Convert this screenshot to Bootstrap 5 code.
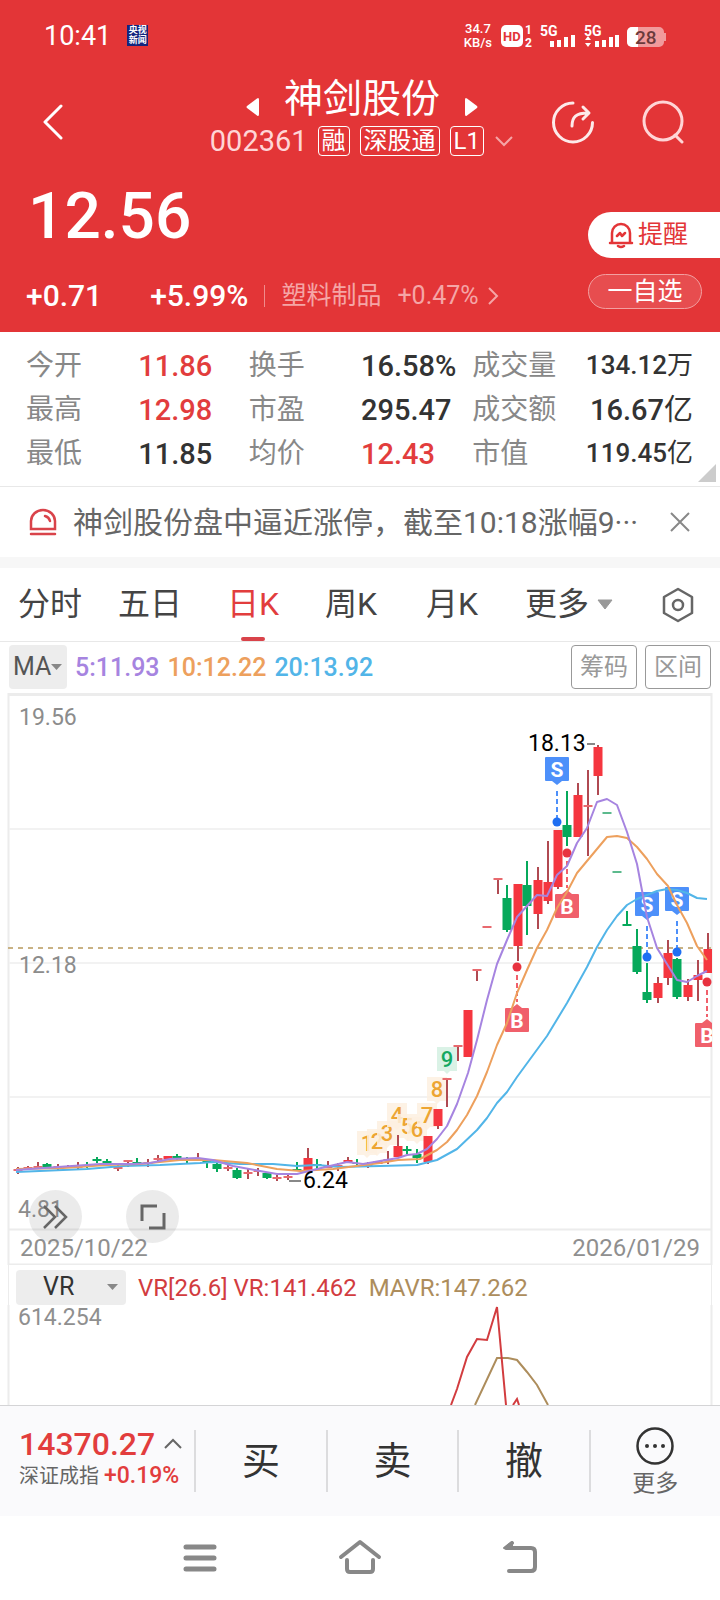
<!DOCTYPE html>
<html lang="zh-CN">
<head>
<meta charset="utf-8">
<meta name="viewport" content="width=device-width, initial-scale=1">
<title>神剑股份 002361</title>
<link href="https://cdn.jsdelivr.net/npm/bootstrap@5.3.0/dist/css/bootstrap.min.css" rel="stylesheet">
<style>
  :root { --up:#e23d3d; --brand:#e33537; --ink:#333; --mute:#888; --line:#ececec; }
  body { font-family: Roboto, "Noto Sans CJK SC", sans-serif; color: var(--ink); background:#fff; line-height:1.2; }
  button, select { font-family: inherit; color: inherit; }
  svg { display:block; flex-shrink:0; }
  .bare { background:none; border:0; padding:0; }
  .quote-head { background: var(--brand); color:#fff; height:332px; }
  .status-bar { height:72px; padding-left:44px; padding-right:50px; }
  .clock { font-size:27px; }
  .news-app { background:#14257d; font-size:9px; line-height:10px; width:21px; height:21px; }
  .net-speed { font-size:13px; line-height:14px; font-weight:500; }
  .title-bar { height:100px; padding-left:42px; padding-right:36px; }
  .title-block { padding-bottom:12px; margin-right:38px; }
  .stock-name { font-size:39px; line-height:50px; }
  .stock-sub { gap:10px; }
  .stock-code { font-size:29px; color:#ffd5d6; }
  .tag { border:1px solid #fff; border-radius:4px; font-size:24px; line-height:28px; padding:0 3px; }
  .price { font-size:64px; font-weight:500; line-height:90px; padding-left:28px; }
  .chg-row { padding:16px 0 0 26px; }
  .chg { font-size:30px; font-weight:500; }
  .sector { font-size:25px; color:#f5a5a6; border-left:1px solid #f08b8c; line-height:22px; text-decoration:none; }
  .remind { background:#fff; color:var(--brand); border-radius:23px 0 0 23px; width:132px; height:46px; font-size:25px; }
  .favor { border:1px solid #f2a0a1; background:#e74d4f; color:#fff; border-radius:18px; width:114px; height:35px; font-size:25px; line-height:25px; margin-right:18px; }
  .stats { height:155px; padding:12px 27px 0 26px; border-bottom:1px solid #e8e8e8; display:grid; grid-template-columns:112fr 110fr 112fr 111fr 86fr 134fr; grid-auto-rows:44px; align-items:center; font-size:29px; position:relative; }
  .stats dt { font-weight:400; color:var(--mute); white-space:nowrap; font-size:28px; }
  .stats dd { margin:0; font-weight:500; white-space:nowrap; }
  .stats .end-val { text-align:right; }
  .stats .tight { font-size:26px; }
  .unit { font-weight:400; }
  .up { color:var(--up); }
  .corner { position:absolute; right:4px; bottom:4px; }
  .flash { height:70px; padding:0 29px; font-size:30px; color:#666; }
  .flash-text { padding-top:2px; }
  .periods { height:85px; border-top:11px solid #f7f7f7; border-bottom:1px solid #e8e8e8; padding:0 26px 0 18px; font-size:32px; display:grid; grid-template-columns:100fr 109fr 98fr 101fr 99fr 137fr 32fr; justify-items:start; }
  .periods button { height:100%; position:relative; color:#444; }
  .periods button.active { color:var(--up); }
  .periods button.active::after { content:""; position:absolute; left:14px; right:14px; bottom:0; height:4px; border-radius:2px; background:#d9434a; }
  .ma-row { height:50px; padding:3px 9px; font-size:25px; }
  .pick { appearance:none; border:0; border-radius:4px; background:#ededed; color:#555; }
  .pick-wrap { position:relative; }
  .pick-wrap svg { position:absolute; right:5px; top:50%; translate:0 -50%; pointer-events:none; }
  .ma-pick { width:58px; height:44px; font-size:25px; padding-left:4px; }
  .vr-pick { width:110px; height:35px; font-size:25px; padding-left:27px; color:#333; }
  .wide svg { right:8px; }
  .ma-val { font-weight:500; padding-top:2px; }
  .boxed { border:1px solid #999; border-radius:4px; background:#fff; color:#999; font-size:24px; width:66px; height:44px; padding:0; }
  .chart-area { position:relative; }
  .chart-area svg.plot, .vr-plot { width:100%; height:auto; }
  .fab { position:absolute; bottom:22px; width:53px; height:53px; border-radius:50%; background:rgba(120,120,120,.15); border:0; padding:0; }
  .fab-scroll { left:4%; }
  .fab-full { left:17.5%; }
  .vr-row { height:40px; font-size:24px; margin:0 8px; border-left:1px solid var(--line); border-right:1px solid var(--line); padding:4px 16px 0 7px; }
  .vr-row span { padding-top:2px; }
  .vr-red { color:#d23c3f; } .vr-tan { color:#ad8d5c; }
  .trade-bar { background:#fafafc; border-top:1px solid #d4d4d6; height:111px; }
  .index-cell { width:27%; padding-left:19px; padding-bottom:4px; }
  .index-val { font-size:32px; font-weight:500; line-height:34px; }
  .index-sub { font-size:20px; color:#666; line-height:30px; }
  .index-sub span { font-size:23px; font-weight:500; }
  .cell { border-left:2px solid #dcdcde; height:62px; font-size:38px; line-height:62px; flex:1; }
  .cell-more { font-size:23px; line-height:28px; color:#666; flex:1; gap:4px; padding-top:2px; }
  .sys-nav { height:84px; }
</style>
</head>
<body>
<header class="quote-head d-flex flex-column">
  <div class="status-bar d-flex align-items-center justify-content-between">
    <div class="d-flex align-items-center gap-3">
      <span class="clock">10:41</span>
      <span class="news-app text-center fw-bold">央视<br>新闻</span>
    </div>
    <div class="d-flex align-items-center gap-2">
      <span class="net-speed text-center">34.7<br>KB/s</span>
      <svg width="170" height="28" viewBox="500 22 170 28" fill="#fff" font-family="Roboto, sans-serif" font-weight="700">
        <rect x="501" y="25" width="22" height="22" rx="5"/>
        <text x="503" y="41" font-size="13" fill="#e33537">HD</text>
        <text x="525" y="34" font-size="12">1</text><text x="525" y="47" font-size="12">2</text>
        <text x="540" y="36" font-size="14">5G</text>
        <path d="M550 41h4v6h-4zM557 40h4v7h-4zM564 37h4v10h-4zM571 35h4v12h-4z"/>
        <text x="584" y="36" font-size="14">5G</text>
        <path d="M588 36l3 4h-6zM585 43h6l-3 4zM595 41h4v6h-4zM602 40h4v7h-4zM609 37h4v10h-4zM615 35h4v12h-4z"/>
        <path d="M632 27h27a5 5 0 0 1 5 5v1h2v8h-2v1a5 5 0 0 1-5 5h-27a5 5 0 0 1-5-5v-10a5 5 0 0 1 5-5z" opacity=".5"/>
        <path d="M638 27v20h-6a5 5 0 0 1-5-5v-10a5 5 0 0 1 5-5z"/>
        <text x="635" y="44" font-size="19" font-weight="500" fill="#6b3a3b">28</text>
      </svg>
    </div>
  </div>
  <div class="title-bar d-flex align-items-center justify-content-between">
    <button class="bare" aria-label="返回"><svg width="22" height="36" viewBox="0 0 22 36" fill="none" stroke="#fff" stroke-width="3" stroke-linecap="round" stroke-linejoin="round"><path d="M19 2L3 18l16 16"/></svg></button>
    <div class="title-block d-flex flex-column align-items-center ms-auto">
      <div class="d-flex align-items-center gap-4">
        <button class="bare pt-3" aria-label="上一只"><svg width="14" height="20" viewBox="0 0 14 20" fill="#fff"><path d="M11 1.500Q13 0 13 3v14q0 3-2 1.500L1 11q-1-1 0-2z"/></svg></button>
        <h1 class="stock-name fw-normal m-0">神剑股份</h1>
        <button class="bare pt-3" aria-label="下一只"><svg width="14" height="20" viewBox="0 0 14 20" fill="#fff"><path d="M3 1.500Q1 0 1 3v14q0 3 2 1.500L13 11q1-1 0-2z"/></svg></button>
      </div>
      <div class="stock-sub d-flex align-items-center">
        <span class="stock-code">002361</span>
        <span class="tag">融</span><span class="tag">深股通</span><span class="tag">L1</span>
        <svg width="20" height="12" viewBox="0 0 20 12" fill="none" stroke="#f5a5a6" stroke-width="2"><path d="M2 2l8 8 8-8"/></svg>
      </div>
    </div>
    <div class="d-flex align-items-center gap-5">
      <button class="bare" aria-label="分享"><svg width="42" height="44" viewBox="0 0 42 44" fill="none" stroke="#fdeaea" stroke-width="3" stroke-linecap="round" stroke-linejoin="round"><path d="M21 3A19.500 19.500 0 1 0 40.500 22.500M20 26c0-9 4-13 16-13M31 7l6 6-6 6"/></svg></button>
      <button class="bare" aria-label="搜索"><svg width="42" height="44" viewBox="0 0 42 44" fill="none" stroke="#ffd5d6" stroke-width="3" stroke-linecap="round"><circle cx="21" cy="21" r="19"/><path d="M33 35l7 7"/></svg></button>
    </div>
  </div>
  <div class="d-flex justify-content-between flex-grow-1">
    <div>
      <div class="price">12.56</div>
      <div class="chg-row d-flex align-items-center">
        <span class="chg">+0.71</span>
        <span class="chg ms-5 ps-0">+5.99%</span>
        <a class="sector d-flex align-items-center ms-3 ps-3 gap-2" href="#">塑料制品 <span class="ms-2">+0.47%</span>
          <svg width="12" height="20" viewBox="0 0 12 20" fill="none" stroke="#f5a5a6" stroke-width="2"><path d="M2 2l8 8-8 8"/></svg></a>
      </div>
    </div>
    <div class="d-flex flex-column align-items-end pt-4 mt-3">
      <button class="remind border-0 d-flex align-items-center gap-1 p-0 ps-3">
        <svg class="ms-1" width="26" height="28" viewBox="0 0 26 28" fill="none" stroke="#e33537" stroke-width="2.500" stroke-linecap="round" stroke-linejoin="round"><path d="M2 22h22M4 22V12a9 9 0 0 1 18 0v10M9 15l3-3 2 3 3-3M10 25q3 2 6 0"/></svg>提醒</button>
      <button class="favor mt-3 p-0">一自选</button>
    </div>
  </div>
</header>

<dl class="stats m-0">
  <dt>今开</dt><dd class="up">11.86</dd><dt>换手</dt><dd>16.58%</dd><dt>成交量</dt><dd class="end-val tight">134.12<span class="unit">万</span></dd>
  <dt>最高</dt><dd class="up">12.98</dd><dt>市盈</dt><dd>295.47</dd><dt>成交额</dt><dd class="end-val">16.67<span class="unit">亿</span></dd>
  <dt>最低</dt><dd>11.85</dd><dt>均价</dt><dd class="up">12.43</dd><dt>市值</dt><dd class="end-val tight">119.45<span class="unit">亿</span></dd>
  <svg class="corner" width="18" height="18"><path d="M18 0v18H0z" fill="#ccc"/></svg>
</dl>

<section class="flash d-flex align-items-center gap-3">
  <svg width="28" height="28" viewBox="0 0 28 28" fill="none" stroke="#d9434a" stroke-width="2.500" stroke-linecap="round"><path d="M2 21V13a12 11 0 0 1 24 0v8zM2 26h24M16 8q4 1 5 5"/></svg>
  <span class="flash-text flex-grow-1 text-nowrap">神剑股份盘中逼近涨停，截至10:18涨幅9···</span>
  <button class="bare" aria-label="关闭"><svg width="22" height="22" viewBox="0 0 22 22" stroke="#888" stroke-width="2"><path d="M2 2l18 18M20 2L2 20"/></svg></button>
</section>

<nav class="periods">
  <button class="bare">分时</button><button class="bare">五日</button><button class="bare active">日K</button><button class="bare">周K</button><button class="bare">月K</button>
  <button class="bare d-flex align-items-center gap-2">更多 <svg width="16" height="11"><path d="M1 1h14L8 10z" fill="#999" stroke="#999" stroke-linejoin="round"/></svg></button>
  <button class="bare" aria-label="设置"><svg width="32" height="36" viewBox="0 0 32 36" fill="none" stroke="#666" stroke-width="2.500" stroke-linejoin="round"><path d="M16 2l14 8v16l-14 8-14-8V10z"/><circle cx="16" cy="18" r="5"/></svg></button>
</nav>

<section class="ma-row d-flex align-items-center gap-2">
  <label class="pick-wrap"><select class="pick ma-pick" aria-label="主图指标"><option>MA</option></select>
    <svg width="11" height="8"><path d="M0 1h11L5.500 7z" fill="#888"/></svg></label>
  <span class="ma-val" style="color:#a684e0">5:11.93</span>
  <span class="ma-val" style="color:#eda05d">10:12.22</span>
  <span class="ma-val me-auto" style="color:#52b5e8">20:13.92</span>
  <button class="boxed">筹码</button><button class="boxed">区间</button>
</section>

<main>
  <div class="chart-area">
    <svg class="plot" viewBox="0 692 720 573" fill="none" font-family="Roboto, sans-serif">
      <path d="M8 694.500H711" stroke="#ececec" stroke-width="3"/>
      <path d="M8.500 693V1265M711.500 693V1265M8 1229.500H711M8 1264.500H711" stroke="#ececec" stroke-width="2"/>
      <path d="M9 829H711M9 963H711M9 1097H711" stroke="#f2f2f2" stroke-width="2"/>
      <g fill="#8c8c8c" font-size="23">
        <text x="19" y="725">19.56</text><text x="19" y="973">12.18</text><text x="18" y="1217">4.81</text>
      </g>
      <g fill="#8f8f8f" font-size="24"><text x="20" y="1256">2025/10/22</text><text x="700" y="1256" text-anchor="end">2026/01/29</text></g>
      <g id="streak" font-size="22" font-weight="500" text-anchor="middle"></g>
      <path d="M8 948H711" stroke="#c9b284" stroke-width="2" stroke-dasharray="5 5"/>
      <clipPath id="frame"><path d="M8 692H712V1265H8z"/></clipPath>
      <g id="candles" clip-path="url(#frame)"></g>
      <g id="signals" clip-path="url(#frame)" font-size="21" font-weight="700" text-anchor="middle"></g>
      <g stroke-width="2" stroke-linejoin="round">
        <polyline stroke="#52b5e8" points="16,1172 63,1170 87,1169 123,1166 160,1165 200,1163 213,1162 240,1164 273,1164 297,1166 317,1165 340,1167 380,1166 417,1165 437,1160 457,1149 477,1130 487,1118 497,1103 507,1092 517,1077 547,1036 567,1003 587,967 597,947 607,930 617,916 627,905 637,899 647,895 657,891 667,889 677,890 687,893 697,898 707,899"/>
        <polyline stroke="#eda05d" points="16,1169 63,1168 107,1165 140,1164 180,1160 213,1160 247,1163 277,1169 300,1171 333,1169 380,1163 398,1160 420,1159 437,1150 447,1142 457,1130 467,1115 477,1096 487,1072 497,1045 507,1023 517,993 527,970 537,948 547,930 557,908 567,892 577,873 607,837 617,836 627,838 637,847 647,859 657,874 668,886 677,905 687,923 697,946 707,960"/>
        <polyline stroke="#a684e0" points="16,1170 58,1167 100,1164 133,1164 150,1163 170,1159 198,1158 213,1160 233,1166 260,1171 277,1174 297,1174 317,1169 347,1162 363,1164 380,1161 398,1158 407,1155 417,1154 427,1149 437,1139 447,1126 457,1104 468,1073 477,1040 487,1000 497,964 507,940 517,917 527,906 537,895 547,896 557,875 567,866 577,843 587,828 597,802 607,799 617,805 627,832 637,864 647,917 657,948 667,964 677,980 687,982 697,976 707,971"/>
      </g>
      <g fill="#000" font-size="23"><text x="528" y="751">18.13</text><text x="303" y="1188">6.24</text></g>
      <path d="M587 744h8M289 1181h12" stroke="#888" stroke-width="2"/>
    </svg>
    <button class="fab fab-scroll" aria-label="展开"><svg class="m-auto" width="28" height="26" viewBox="0 0 28 26" fill="none" stroke="#666" stroke-width="2.500"><path d="M3 2l11 11L3 24M14 2l11 11-11 11"/></svg></button>
    <button class="fab fab-full" aria-label="全屏"><svg class="m-auto" width="26" height="26" viewBox="0 0 26 26" fill="none" stroke="#666" stroke-width="3"><path d="M2 17V2h15M24 9v15H9"/></svg></button>
  </div>

  <div class="vr-row d-flex align-items-center gap-2 text-nowrap">
    <label class="pick-wrap wide"><select class="pick vr-pick" aria-label="副图指标"><option>VR</option></select>
      <svg width="11" height="8"><path d="M0 1h11L5.500 7z" fill="#888"/></svg></label>
    <span class="vr-red ms-1">VR[26.6] VR:141.462</span>
    <span class="vr-tan ms-1">MAVR:147.262</span>
  </div>
  <svg class="vr-plot" viewBox="0 1305 720 100" fill="none" stroke-width="2">
    <path d="M8.500 1305V1405M711.500 1305V1405" stroke="#ececec"/>
    <text x="18" y="1325" font-family="Roboto, sans-serif" font-size="23" fill="#8f8f8f">614.254</text>
    <polyline stroke="#ad8d5c" points="475,1405 497,1358 508,1358 517,1360 527,1372 537,1385 548,1405"/>
    <path stroke="#d23c3f" d="M451 1405L457 1389 467 1357 477 1339 487 1340 497 1307 506 1405M513 1405L517 1399 519 1405"/>
  </svg>
</main>

<footer>
  <div class="trade-bar d-flex align-items-center">
    <div class="index-cell">
      <div class="index-val up d-flex align-items-center gap-2">14370.27 <svg width="20" height="12" viewBox="0 0 20 12" fill="none" stroke="#666" stroke-width="2"><path d="M2 10l8-8 8 8"/></svg></div>
      <div class="index-sub text-nowrap">深证成指 <span class="up">+0.19%</span></div>
    </div>
    <button class="bare cell">买</button><button class="bare cell">卖</button><button class="bare cell">撤</button>
    <div class="cell d-flex align-items-center">
    <button class="bare cell-more d-flex flex-column align-items-center">
      <svg width="40" height="40" viewBox="0 0 40 40" fill="#333"><circle cx="20" cy="20" r="17.500" fill="none" stroke="#333" stroke-width="2.500"/><circle cx="12" cy="20" r="2"/><circle cx="20" cy="20" r="2"/><circle cx="28" cy="20" r="2"/></svg>更多</button></div>
  </div>
  <nav class="sys-nav d-flex align-items-center justify-content-center">
    <button class="bare" aria-label="最近任务"><svg width="160" height="40" viewBox="0 0 160 40" stroke="#888" stroke-width="5" stroke-linecap="round"><path d="M66 9h28M66 20h28M66 31h28"/></svg></button>
    <button class="bare" aria-label="主屏幕"><svg width="160" height="40" viewBox="0 0 160 40" fill="none" stroke="#888" stroke-width="4" stroke-linecap="round" stroke-linejoin="round"><path d="M61 19L80 4l19 15M67 22v9q0 3 3 3h20q3 0 3-3v-9"/></svg></button>
    <button class="bare" aria-label="返回上一页"><svg width="160" height="40" viewBox="0 0 160 40" fill="none" stroke="#888" stroke-width="4" stroke-linecap="round" stroke-linejoin="round"><path d="M69 33h22q4 0 4-4V14q0-4-4-4H66l6-5"/><path d="M64 10l8-6v6z" fill="#888" stroke-width="2"/></svg></button>
  </nav>
</footer>

<script>
  // x, wick top, wick bottom, body top, body bottom, direction (1 rises, 0 falls)
  const bars = [
    [18,1167,1174,1169,1171,1],[28,1166,1169,1167,1169,1],[38,1162,1168,1166,1168,1],[47,1163,1168,1164,1167,0],[58,1164,1170,1166,1168,1],[68,1165,1168,1166,1168,1],
    [78,1162,1169,1166,1168,1],[87,1162,1168,1165,1166,0],[97,1157,1163,1159,1161,0],[107,1159,1166,1161,1165,0],[118,1165,1171,1167,1169,1],
    [128,1160,1167,1160,1162,1],[137,1158,1164,1162,1163,0],[148,1159,1167,1162,1164,1],[158,1155,1163,1158,1160,1],[168,1156,1160,1156,1159,1],
    [177,1154,1160,1156,1158,0],[187,1157,1163,1159,1161,0],[198,1153,1160,1158,1160,1],[207,1159,1168,1160,1162,0],[217,1163,1172,1164,1169,0],
    [228,1165,1171,1167,1169,1],[237,1168,1179,1170,1178,0],[248,1169,1179,1172,1174,1],[258,1168,1176,1171,1172,1],[267,1172,1179,1173,1178,0],
    [277,1175,1181,1177,1179,1],[288,1175,1180,1176,1178,1],[297,1162,1171,1169,1170,0],[308,1148,1171,1158,1171,1],[317,1159,1169,1164,1166,0],
    [328,1161,1168,1166,1168,1],[338,1163,1171,1165,1167,1],[348,1157,1163,1160,1163,1],[357,1159,1167,1163,1164,0],[368,1162,1168,1164,1166,1],
    [378,1161,1164,1161,1164,1],[388,1151,1164,1159,1161,1],[398,1135,1157,1146,1157,1],[407,1146,1154,1149,1151,0],[417,1149,1163,1154,1158,0],
    [428,1136,1164,1136,1162,1],[438,1109,1129,1109,1126,1],[447,1079,1107,1078,1080,1],[458,1045,1061,1045,1047,1],[468,1010,1057,1010,1057,1],
    [477,970,981,969,971,1],[487,926,928,926,928,1],[498,878,894,878,880,1],[507,885,932,898,930,0],[518,884,961,884,946,1],[527,861,935,885,906,0],
    [538,867,929,880,914,1],[548,841,904,882,901,1],[558,830,889,830,887,1],[567,791,846,825,837,0],[578,783,837,795,837,1],[588,770,856,805,807,1],
    [598,745,795,747,776,1],[607,812,814,812,814,0],[617,871,873,871,873,0],[627,911,926,924,926,0],[637,929,974,946,972,0],[647,963,1003,992,1000,0],
    [658,977,1003,983,998,1],[668,940,985,953,978,1],[677,958,999,959,997,0],[688,979,1001,985,997,1],[698,960,1001,975,980,1],[708,933,973,949,973,1]];
  document.getElementById('candles').innerHTML = bars.map(([x,t,b,o,c,up]) => {
    const thin = c - o <= 2;
    const body = up ? (thin ? '#e8696e' : '#f5363f') : (b - t <= 2 ? '#5cba8d' : '#06a95b');
    return `<path d="M${x} ${t}V${b}" stroke="${up ? '#b04a52' : body}" stroke-width="2"/><rect x="${x-4.5}" y="${o}" width="9" height="${c-o}" fill="${body}"/>`;
  }).join('');

  // buy and sell markers: letter, x, box top, dot y
  const marks = [['S',557,757,822],['S',647,892,957],['S',677,887,952],['B',567,894,853],['B',517,1008,967],['B',707,1023,982]];
  document.getElementById('signals').innerHTML = marks.map(([k,x,y,d]) => {
    const s = k === 'S', col = s ? '#4d90fa' : '#f0606b', dot = s ? '#1f6ff2' : '#e83340';
    const tip = s ? `M${x-5} ${y+24}h10l-5 4z` : `M${x-5} ${y}h10l-5 -4z`;
    const dash = s ? `M${x} ${y+34}V${d-4}` : `M${x} ${d+8}V${y-6}`;
    return `<path d="${dash}" stroke="${col}" stroke-width="2" stroke-dasharray="5 3"/><circle cx="${x}" cy="${d}" r="4.500" fill="${dot}"/>
      <rect x="${x-12}" y="${y}" width="24" height="24" rx="1" fill="${col}"/><path d="${tip}" fill="${col}"/><text x="${x}" y="${y+20}" fill="#fff">${k}</text>`;
  }).join('');

  // nine-turn count labels: digit, centre x, baseline
  const turns = [[1,367,1151],[2,377,1149],[3,387,1141],[4,397,1123],[5,407,1134],[6,417,1137],[7,427,1123],[8,437,1097],[9,447,1067]];
  document.getElementById('streak').innerHTML = turns.map(([n,x,y]) =>
    `<path d="M${x-10} ${y-20}h20v24h-7l-3 3-3-3h-7z" fill="${n === 9 ? '#d3f0e2' : '#fdf0e0'}" opacity=".85"/><text x="${x}" y="${y}" fill="${n === 9 ? '#14a862' : '#eda532'}">${n}</text>`).join('');
</script>
<script src="https://cdn.jsdelivr.net/npm/bootstrap@5.3.0/dist/js/bootstrap.bundle.min.js"></script>
</body>
</html>
